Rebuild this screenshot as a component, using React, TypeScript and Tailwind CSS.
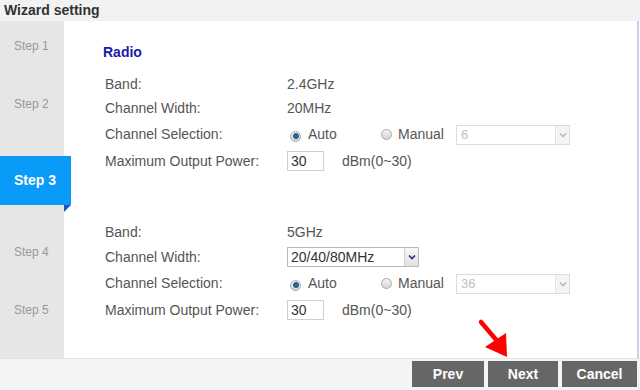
import React from 'react';

const font = { fontFamily: '"Liberation Sans", Arial, sans-serif' };

const Radio: React.FC<{ checked?: boolean }> = ({ checked }) => (
  <span className="relative inline-flex w-[11px] h-[11px] rounded-full border border-[#a8a8a8] bg-gradient-to-b from-[#f4f4f4] to-[#d4d4d4] items-center justify-center">
    {checked && <span className="w-[6px] h-[6px] rounded-full bg-[#2b6a96] border border-[#1d4f75]" />}
  </span>
);

const Chevron: React.FC<{ color: string }> = ({ color }) => (
  <svg width="8" height="6" viewBox="0 0 8 6">
    <path d="M1 1.5 L4 4.5 L7 1.5" fill="none" stroke={color} strokeWidth="1.6" />
  </svg>
);

const DisabledSelect: React.FC<{ value: string }> = ({ value }) => (
  <div className="w-[114px] h-[20px] border border-[#dcdcdc] bg-white flex items-center">
    <span className="flex-1 pl-[4px] text-[13px] text-[#c0c0c0]">{value}</span>
    <span className="w-[14px] h-full border-l border-[#e2e2e2] bg-[#f4f4f4] flex items-center justify-center">
      <Chevron color="#b8b8c8" />
    </span>
  </div>
);

const ChannelSelection: React.FC<{ manual: string }> = ({ manual }) => (
  <div className="flex items-center">
    <span className="ml-[3px]"><Radio checked /></span>
    <span className="ml-[7px] w-[73px]">Auto</span>
    <Radio />
    <span className="ml-[6px] w-[58px]">Manual</span>
    <DisabledSelect value={manual} />
  </div>
);

const PowerInput: React.FC = () => (
  <div className="flex items-center">
    <div className="w-[37px] h-[20px] border border-[#cfcfcf] bg-white flex items-center pl-[3px] text-[#333]">30</div>
    <span className="ml-[18px]">dBm(0~30)</span>
  </div>
);

const Row: React.FC<{ label: string; h: string; children: React.ReactNode }> = ({ label, h, children }) => (
  <div className={`flex items-center ${h}`}>
    <div className="w-[182px]">{label}</div>
    <div>{children}</div>
  </div>
);

const steps = [
  { label: 'Step 1', mt: 'mt-[11px]' },
  { label: 'Step 2', mt: 'mt-[30px]' },
];
const stepsAfter = [
  { label: 'Step 4', mt: 'mt-[33px]' },
  { label: 'Step 5', mt: 'mt-[30px]' },
];

export default function App() {
  return (
    <div className="relative w-[640px] h-[390px] flex flex-col bg-white overflow-hidden" style={font}>
      <div className="h-[21px] bg-[#f2f2f2] flex items-center pl-[4px] text-[14px] font-bold text-[#333]">
        Wizard setting
      </div>

      <div className="flex flex-1">
        <div className="w-[64px] bg-[#e6e6e6] flex flex-col relative z-10">
          {steps.map((s) => (
            <div key={s.label} className={`${s.mt} h-[28px] flex items-center pl-[14px] text-[12px] text-[#999]`}>
              {s.label}
            </div>
          ))}
          <div className="relative mt-[38px] h-[49px] w-[71px] bg-[#0a9bf8] flex items-center pl-[14px] text-[14px] font-bold text-white">
            Step 3
            <span className="absolute left-[64px] top-[49px] w-0 h-0 border-l-[7px] border-l-[#1e52c8] border-b-[7px] border-b-transparent" />
          </div>
          {stepsAfter.map((s) => (
            <div key={s.label} className={`${s.mt} h-[28px] flex items-center pl-[14px] text-[12px] text-[#999]`}>
              {s.label}
            </div>
          ))}
        </div>

        <div className="flex-1 border-r-[2px] border-[#c9cfe6] pl-[41px] pt-[22px] text-[14px] text-[#555] mr-[1px]">
          <div className="h-[18px] flex items-center -ml-[2px] text-[14px] font-bold text-[#1a1aa8]">Radio</div>
          <div className="mt-[11px]">
            <Row label="Band:" h="h-[24px]">2.4GHz</Row>
            <Row label="Channel Width:" h="h-[25px]">20MHz</Row>
            <Row label="Channel Selection:" h="h-[27px]"><ChannelSelection manual="6" /></Row>
            <Row label="Maximum Output Power:" h="h-[26px]"><PowerInput /></Row>
          </div>
          <div className="mt-[46px]">
            <Row label="Band:" h="h-[24px]">5GHz</Row>
            <Row label="Channel Width:" h="h-[26px]">
              <div className="w-[132px] h-[20px] border border-[#b8b8b8] bg-white flex items-center">
                <span className="flex-1 pl-[3px] text-[#333]">20/40/80MHz</span>
                <span className="w-[14px] h-full border-l border-[#d0d0d0] bg-gradient-to-b from-[#f8f8f8] to-[#e2e2e2] flex items-center justify-center">
                  <Chevron color="#1e2f6e" />
                </span>
              </div>
            </Row>
            <Row label="Channel Selection:" h="h-[27px]"><ChannelSelection manual="36" /></Row>
            <Row label="Maximum Output Power:" h="h-[26px]"><PowerInput /></Row>
          </div>
        </div>
      </div>

      <div className="h-[32px] bg-[#f4f4f4] border-t border-[#e2e2e2] flex justify-end items-start pt-[2px] pr-[3px] gap-[4px]">
        <button className="w-[72px] h-[26px] bg-[#666] text-white font-bold text-[14px]">Prev</button>
        <button className="w-[70px] h-[26px] bg-[#666] text-white font-bold text-[14px]">Next</button>
        <button className="w-[75px] h-[26px] bg-[#666] text-white font-bold text-[14px]">Cancel</button>
      </div>

      <svg className="absolute left-[476px] top-[318px]" width="40" height="42" viewBox="0 0 40 42">
        <line x1="5" y1="4" x2="22" y2="24" stroke="#ff0000" strokeWidth="4.5" strokeLinecap="round" />
        <polygon points="9,29 30,15 31,39" fill="#ff0000" />
      </svg>
    </div>
  );
}
